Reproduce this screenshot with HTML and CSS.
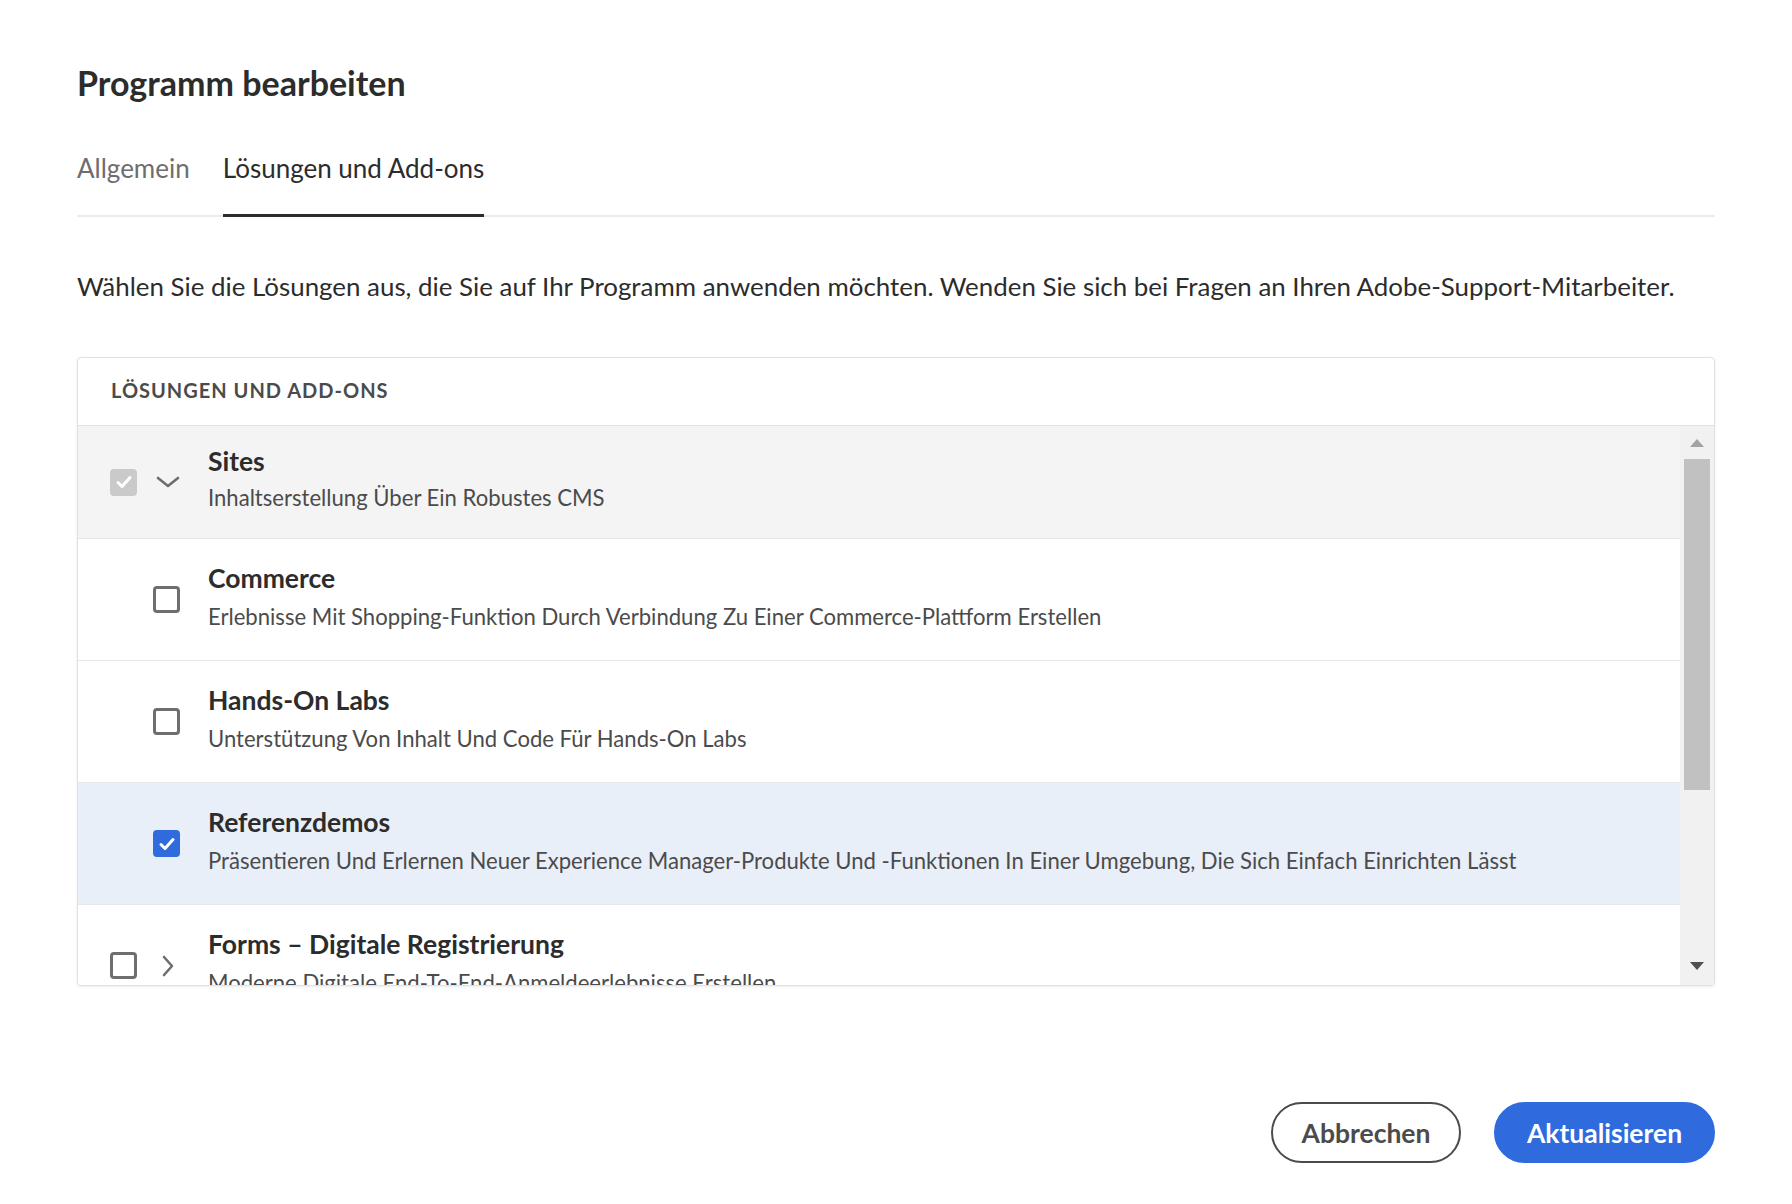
FILE: index.html
```html
<!DOCTYPE html>
<html lang="de">
<head>
<meta charset="utf-8">
<title>Programm bearbeiten</title>
<link rel="stylesheet" href="styles.css">
</head>
<body>
<div class="dialog">
  <h1 class="title">Programm bearbeiten</h1>
  <div class="tabs">
    <div class="tab">Allgemein</div>
    <div class="tab active">Lösungen und Add-ons</div>
  </div>
  <p class="desc">Wählen Sie die Lösungen aus, die Sie auf Ihr Programm anwenden möchten. Wenden Sie sich bei Fragen an Ihren Adobe-Support-Mitarbeiter.</p>

  <div class="card">
    <div class="card-head">LÖSUNGEN UND ADD-ONS</div>
    <div class="list-wrap">
      <div class="list">
        <div class="row row-gray">
          <div class="controls">
            <span class="cb cb-disabled"><svg viewBox="0 0 26 26" width="26" height="26"><path d="M7 13.5l4 4 8-9" fill="none" stroke="#fff" stroke-width="3" stroke-linecap="round" stroke-linejoin="round"/></svg></span>
            <span class="chev"><svg viewBox="0 0 24 12" width="24" height="12"><path d="M2 2l10 8 10-8" fill="none" stroke="#6e6e6e" stroke-width="2.6" stroke-linecap="round" stroke-linejoin="round"/></svg></span>
          </div>
          <div class="text">
            <div class="name">Sites</div>
            <div class="sub">Inhaltserstellung Über Ein Robustes CMS</div>
          </div>
        </div>
        <div class="row">
          <div class="controls nested"><span class="cb"></span></div>
          <div class="text">
            <div class="name">Commerce</div>
            <div class="sub">Erlebnisse Mit Shopping-Funktion Durch Verbindung Zu Einer Commerce-Plattform Erstellen</div>
          </div>
        </div>
        <div class="row">
          <div class="controls nested"><span class="cb"></span></div>
          <div class="text">
            <div class="name">Hands-On Labs</div>
            <div class="sub">Unterstützung Von Inhalt Und Code Für Hands-On Labs</div>
          </div>
        </div>
        <div class="row row-blue">
          <div class="controls nested"><span class="cb cb-checked"><svg viewBox="0 0 26 26" width="26" height="26"><path d="M7 13.5l4 4 8-9" fill="none" stroke="#fff" stroke-width="3" stroke-linecap="round" stroke-linejoin="round"/></svg></span></div>
          <div class="text">
            <div class="name">Referenzdemos</div>
            <div class="sub">Präsentieren Und Erlernen Neuer Experience Manager-Produkte Und -Funktionen In Einer Umgebung, Die Sich Einfach Einrichten Lässt</div>
          </div>
        </div>
        <div class="row">
          <div class="controls">
            <span class="cb"></span>
            <span class="chev chev-right"><svg viewBox="0 0 12 24" width="12" height="24"><path d="M2 3l8 9-8 9" fill="none" stroke="#6e6e6e" stroke-width="2.6" stroke-linecap="round" stroke-linejoin="round"/></svg></span>
          </div>
          <div class="text">
            <div class="name">Forms – Digitale Registrierung</div>
            <div class="sub">Moderne Digitale End-To-End-Anmeldeerlebnisse Erstellen</div>
          </div>
        </div>
      </div>
      <div class="scrollbar">
        <span class="arrow-up"></span>
        <div class="track"><div class="thumb"></div></div>
        <span class="arrow-down"></span>
      </div>
    </div>
  </div>

  <div class="actions">
    <button class="btn btn-secondary">Abbrechen</button>
    <button class="btn btn-primary">Aktualisieren</button>
  </div>
</div>
</body>
</html>
```
FILE: styles.css
```css
* { box-sizing: border-box; }
html, body {
  margin: 0;
  padding: 0;
  background: #fff;
}
body {
  font-family: Lato, "Open Sans", sans-serif;
  color: #2c2c2c;
}
.dialog {
  width: 1715px;
  padding: 63px 0 0 77px;
}
.title {
  margin: 0;
  font-size: 34px;
  line-height: 40px;
  font-weight: 700;
  color: #2c2c2c;
}
.tabs {
  margin-top: 45px;
  display: flex;
  gap: 33px;
  border-bottom: 2px solid #ebebeb;
}
.tab {
  font-size: 26px;
  line-height: 40px;
  padding-bottom: 26px;
  border-bottom: 3px solid transparent;
  margin-bottom: -2px;
  color: #6e6e6e;
}
.tab.active {
  color: #2c2c2c;
  border-bottom-color: #2c2c2c;
}
.desc {
  margin: 53px 0 0;
  font-size: 25.9px;
  line-height: 32px;
  color: #2c2c2c;
}
.card {
  margin-top: 55px;
  border: 1px solid #e1e1e1;
  border-radius: 4px;
  box-shadow: 0 1px 3px rgba(0,0,0,0.08);
  overflow: hidden;
}
.card-head {
  height: 68px;
  display: flex;
  align-items: center;
  padding-left: 33px;
  padding-bottom: 4px;
  font-size: 20px;
  font-weight: 700;
  letter-spacing: 1px;
  color: #4b4b4b;
  border-bottom: 1px solid #e1e1e1;
}
.list-wrap {
  display: flex;
  height: 559px;
}
.list {
  flex: 1;
  overflow: hidden;
}
.row {
  height: 122px;
  display: flex;
  align-items: center;
  border-bottom: 1px solid #e8e8e8;
  background: #fff;
}
.row-gray {
  height: 113px;
  background: #f4f4f4;
}
.row-blue {
  background: #e9eff9;
}
.controls {
  width: 130px;
  flex: none;
  display: flex;
  align-items: center;
  padding-left: 32px;
}
.controls.nested {
  padding-left: 75px;
}
.cb {
  width: 27px;
  height: 27px;
  border: 3px solid #6e6e6e;
  border-radius: 4px;
  display: flex;
  align-items: center;
  justify-content: center;
  background: #fff;
}
.cb svg { flex: none; }
.cb-disabled {
  background: #cacaca;
  border-color: #cacaca;
}
.cb-checked {
  background: #2f6bdd;
  border-color: #2f6bdd;
}
.chev {
  margin-left: 19px;
  display: flex;
  align-items: center;
}
.chev-right {
  margin-left: 25px;
}
.text {
  flex: 1;
  padding-bottom: 8px;
}
.name {
  font-size: 26.5px;
  line-height: 32px;
  font-weight: 700;
  color: #2c2c2c;
}
.sub {
  margin-top: 10px;
  font-size: 22.1px;
  line-height: 26px;
  color: #4b4b4b;
}
.row-gray .sub {
  margin-top: 8px;
}
.scrollbar {
  width: 34px;
  flex: none;
  background: #f1f1f1;
  display: flex;
  flex-direction: column;
  align-items: center;
  padding: 13px 0 15px;
}
.arrow-up {
  width: 0;
  height: 0;
  border-left: 7px solid transparent;
  border-right: 7px solid transparent;
  border-bottom: 8px solid #a3a3a3;
}
.track {
  flex: 1;
  width: 100%;
  padding: 12px 4px 0;
}
.thumb {
  height: 331px;
  background: #c1c1c1;
}
.arrow-down {
  width: 0;
  height: 0;
  border-left: 7px solid transparent;
  border-right: 7px solid transparent;
  border-top: 8px solid #505050;
}
.actions {
  margin-top: 116px;
  display: flex;
  justify-content: flex-end;
  gap: 33px;
}
.btn {
  height: 61px;
  border-radius: 31px;
  font-family: Lato, "Open Sans", sans-serif;
  font-size: 26.5px;
  font-weight: 700;
  padding: 0 20px;
  cursor: pointer;
}
.btn-secondary {
  width: 190px;
  background: #fff;
  border: 2px solid #4b4b4b;
  color: #4b4b4b;
}
.btn-primary {
  width: 221px;
  background: #2f6bdd;
  border: 2px solid #2f6bdd;
  color: #fff;
}
```
